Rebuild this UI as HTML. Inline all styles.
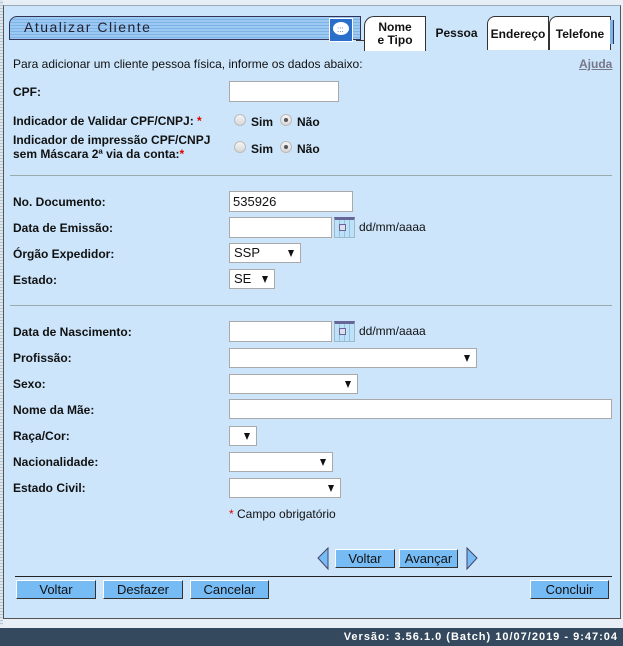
<!DOCTYPE html>
<html><head><meta charset="utf-8"><style>
*{box-sizing:border-box;margin:0;padding:0}
body{width:623px;height:646px;position:relative;overflow:hidden;background:#e8eef5;font-family:"Liberation Sans",Arial,sans-serif;font-size:12px;color:#111}
.a{position:absolute}
.panel{left:3px;top:5px;width:618px;height:614px;background:#cce5fb;border:1px solid #555;border-top-color:#9ab}
.lbl{position:absolute;left:13px;font-weight:bold;font-size:12px}
.in{position:absolute;left:229px;height:21px;background:#fff;border:1px solid #a9a9a9;font-size:13px;padding:2px 3px}
.sel{position:absolute;left:229px;height:20px;background:#fff;border:1px solid #a9a9a9;font-size:13px;padding:1px 4px}
.sel:after{content:"";position:absolute;right:6px;top:6px;border-left:3.5px solid transparent;border-right:3.5px solid transparent;border-top:7px solid #111}
.hr{position:absolute;left:10px;width:602px;height:1px;background:#9aa}
.rad{position:absolute;width:12px;height:12px;border-radius:50%;background:linear-gradient(#f4f4f4,#d8d8d8);border:1px solid #bbb}
.rad.on:after{content:"";position:absolute;left:3px;top:3px;width:4px;height:4px;border-radius:50%;background:#555}
.rt{position:absolute;font-weight:bold;font-size:12px}
.cal{position:absolute;width:21px;height:21px;background:repeating-linear-gradient(90deg,#bfe0f5 0 4px,#8cc4ea 4px 5px);border:1px solid #9bc;border-top:3px solid #669}
.cal:after{content:"";position:absolute;left:4px;top:4px;width:5px;height:5px;border:1px solid #669;background:#dde}
.btn{position:absolute;height:19px;background:#77bbf5;border:1px solid #fff;border-right-color:#333;border-bottom-color:#333;font-size:13px;text-align:center;line-height:17px}
.tab{position:absolute;top:16px;height:35px;background:#fff;border:1px solid #333;border-bottom:none;font-weight:bold;font-size:12px;text-align:center}
</style></head><body>
<div class="a" style="left:0;top:0;width:3px;height:625px;background:repeating-linear-gradient(#dde7ef 0 2px,#b8c6d2 2px 3px)"></div>
<div class="a panel"></div>
<div class="a" style="left:9px;top:16px;width:352px;height:24px;border:1px solid #335;border-radius:8px 0 0 0;background:repeating-linear-gradient(#9cc9f2 0 2px,#7fb2e6 2px 3px)"></div>
<div class="a" style="left:24px;top:19px;font-size:14px;letter-spacing:1.5px;color:#223">Atualizar Cliente</div>
<div class="a" style="left:329px;top:18px;width:24px;height:24px;background:#2a6fc9;border:1px solid #fff"><div class="a" style="left:3px;top:3px;width:16px;height:13px;border-radius:50%;background:#fff"></div><div class="a" style="left:7px;top:7px;font-size:8px;color:#2a6fc9;line-height:8px">:::</div></div>
<div class="a" style="left:356px;top:40px;width:8px;height:1px;background:#333"></div>
<div class="tab" style="left:364px;width:62px;border-top-left-radius:10px"><div style="margin-top:4px;line-height:13px">Nome<br>e Tipo</div></div>
<div class="a" style="left:426px;top:16px;width:61px;height:34px;font-weight:bold;text-align:center;padding-top:10px">Pessoa</div>
<div class="tab" style="left:487px;width:62px;border-top-left-radius:8px;height:34px;padding-top:10px">Endereço</div>
<div class="tab" style="left:549px;width:62px;border-top-left-radius:8px;height:34px;padding-top:10px">Telefone</div>
<div class="a" style="left:610px;top:20px;width:4px;height:24px;background:#7fb2e6;border-right:1px solid #335"></div>
<div class="a" style="left:13px;top:57px;font-size:12px">Para adicionar um cliente pessoa física, informe os dados abaixo:</div>
<div class="a" style="left:579px;top:57px;font-size:12px;font-weight:bold;color:#778;text-decoration:underline">Ajuda</div>

<div class="lbl" style="top:85px">CPF:</div><div class="in" style="top:81px;width:110px"></div>
<div class="lbl" style="top:114px">Indicador de Validar CPF/CNPJ: <span style="color:#d00">*</span></div>
<div class="rad" style="left:234px;top:114px"></div><div class="rt" style="left:251px;top:115px">Sim</div>
<div class="rad on" style="left:280px;top:114px"></div><div class="rt" style="left:297px;top:115px">Não</div>
<div class="lbl" style="top:133px;line-height:14px">Indicador de impressão CPF/CNPJ<br>sem Máscara 2ª via da conta:<span style="color:#d00">*</span></div>
<div class="rad" style="left:234px;top:141px"></div><div class="rt" style="left:251px;top:142px">Sim</div>
<div class="rad on" style="left:280px;top:141px"></div><div class="rt" style="left:297px;top:142px">Não</div>
<div class="hr" style="top:175px"></div>

<div class="lbl" style="top:195px">No. Documento:</div><div class="in" style="top:191px;width:124px">535926</div>
<div class="lbl" style="top:221px">Data de Emissão:</div><div class="in" style="top:217px;width:103px"></div><div class="cal" style="left:334px;top:217px"></div><div class="a" style="left:359px;top:220px;font-size:12px">dd/mm/aaaa</div>
<div class="lbl" style="top:247px">Órgão Expedidor:</div><div class="sel" style="top:243px;width:72px">SSP</div>
<div class="lbl" style="top:273px">Estado:</div><div class="sel" style="top:269px;width:46px">SE</div>
<div class="hr" style="top:305px"></div>

<div class="lbl" style="top:325px">Data de Nascimento:</div><div class="in" style="top:321px;width:103px"></div><div class="cal" style="left:334px;top:321px"></div><div class="a" style="left:359px;top:324px;font-size:12px">dd/mm/aaaa</div>
<div class="lbl" style="top:351px">Profissão:</div><div class="sel" style="top:348px;width:248px"></div>
<div class="lbl" style="top:377px">Sexo:</div><div class="sel" style="top:374px;width:129px"></div>
<div class="lbl" style="top:403px">Nome da Mãe:</div><div class="in" style="top:399px;width:383px;height:20px"></div>
<div class="lbl" style="top:429px">Raça/Cor:</div><div class="sel" style="top:426px;width:28px"></div>
<div class="lbl" style="top:455px">Nacionalidade:</div><div class="sel" style="top:452px;width:104px"></div>
<div class="lbl" style="top:481px">Estado Civil:</div><div class="sel" style="top:478px;width:112px"></div>
<div class="a" style="left:229px;top:507px;font-size:12px"><span style="color:#d00">*</span> Campo obrigatório</div>

<svg class="a" style="left:316px;top:547px" width="14" height="23"><polygon points="12,1 2,11 12,22" fill="#77bbf5" stroke="#446" stroke-width="1"/></svg>
<div class="btn" style="left:335px;top:549px;width:60px">Voltar</div>
<div class="btn" style="left:399px;top:549px;width:59px">Avançar</div>
<svg class="a" style="left:465px;top:547px" width="14" height="23"><polygon points="2,1 12,11 2,22" fill="#77bbf5" stroke="#446" stroke-width="1"/></svg>
<div class="a" style="left:15px;top:576px;width:597px;height:1px;background:#222"></div>
<div class="btn" style="left:16px;top:580px;width:80px">Voltar</div>
<div class="btn" style="left:103px;top:580px;width:80px">Desfazer</div>
<div class="btn" style="left:190px;top:580px;width:79px">Cancelar</div>
<div class="btn" style="left:530px;top:580px;width:79px">Concluir</div>

<div class="a" style="left:0;top:628px;width:623px;height:18px;background:#34495e;color:#fff;font-weight:bold;font-size:11px;letter-spacing:1px;text-align:right;padding-right:5px;line-height:18px">Versão: 3.56.1.0 (Batch) 10/07/2019 - 9:47:04</div>
</body></html>
